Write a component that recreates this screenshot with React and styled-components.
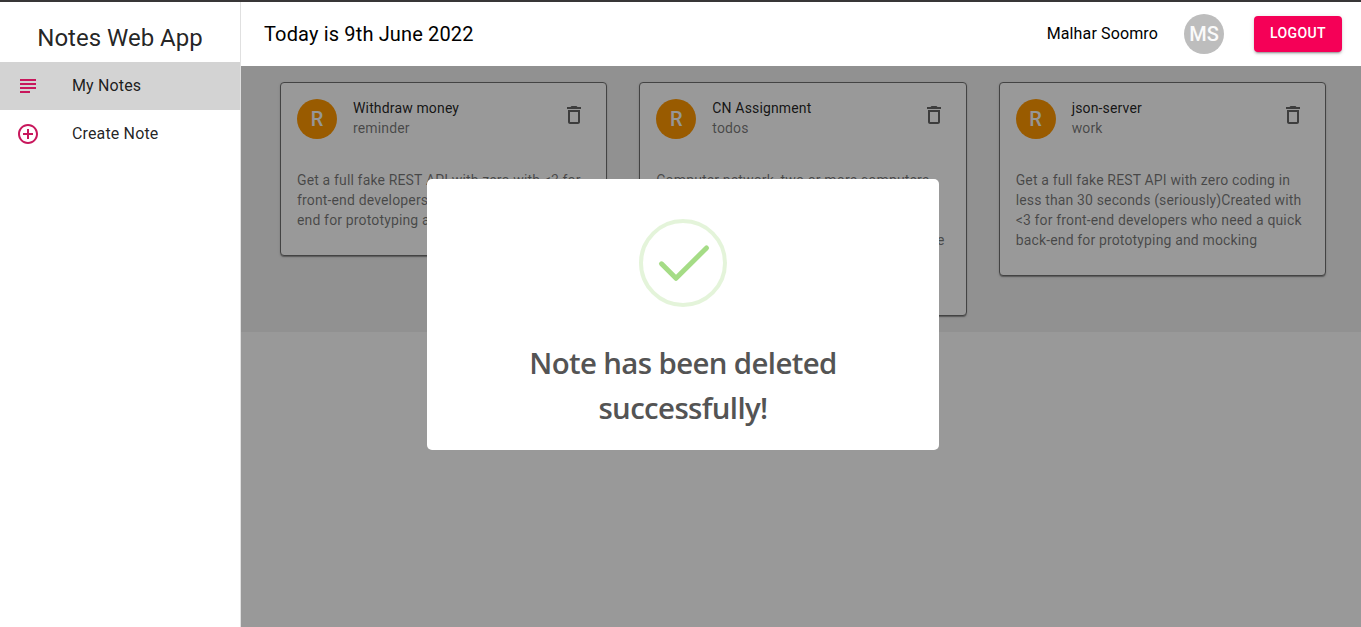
import React from "react";
import styled, { createGlobalStyle } from "styled-components";

const GlobalStyle = createGlobalStyle`
  *, *::before, *::after { box-sizing: border-box; }
  body {
    margin: 0;
    background: #fff;
    color: rgba(0, 0, 0, 0.87);
    font-family: Roboto, "Liberation Sans", sans-serif;
    font-size: 16px;
    overflow: hidden;
  }
`;

const Shell = styled.div`
  display: flex;
  height: 100vh;
  border-top: 2px solid #383637;
`;

const Sidebar = styled.aside`
  flex: none;
  width: 241px;
  border-right: 1px solid #e0e0e0;
`;

const Brand = styled.h1`
  margin: 0;
  padding-top: 20px;
  height: 60px;
  font-size: 24px;
  font-weight: 400;
  line-height: 32px;
  text-align: center;
`;

const NavItem = styled.a`
  display: flex;
  align-items: center;
  height: 48px;
  padding: 0 16px;
  gap: 32px;
  letter-spacing: 0.15px;
  line-height: 24px;
  background: ${(p) => (p.$active ? "#d3d3d3" : "transparent")};
`;

const Icon = styled.svg`
  flex: none;
  width: 24px;
  height: 24px;
  fill: ${(p) => p.$color};
`;

const Column = styled.div`
  flex: 1;
  display: flex;
  flex-direction: column;
`;

const TopBar = styled.header`
  flex: none;
  display: flex;
  align-items: center;
  height: 64px;
  padding: 0 19px 0 23px;
  color: #000;
`;

const Today = styled.div`
  flex: 1;
  font-size: 20px;
  letter-spacing: 0.15px;
`;

const UserName = styled.div`
  letter-spacing: 0.13px;
  line-height: 24px;
  padding-bottom: 1px;
`;

const Avatar = styled.div`
  flex: none;
  display: flex;
  align-items: center;
  justify-content: center;
  width: 40px;
  height: 40px;
  border-radius: 50%;
  background: ${(p) => p.$bg};
  color: #fafafa;
  font-size: 20px;
  font-weight: 500;
  margin: ${(p) => p.$margin || 0};
`;

const LogoutButton = styled.button`
  width: 88px;
  height: 36px;
  padding: 0 0 2px;
  border: 0;
  border-radius: 4px;
  background: #f50057;
  color: #fff;
  font: 500 14px Roboto, sans-serif;
  letter-spacing: 0.4px;
  box-shadow: 0 3px 1px -2px rgba(0, 0, 0, 0.2), 0 2px 2px rgba(0, 0, 0, 0.14),
    0 1px 5px rgba(0, 0, 0, 0.12);
`;

const Main = styled.main`
  flex: 1;
  position: relative;
`;

const Board = styled.section`
  display: grid;
  grid-template-columns: repeat(3, 1fr);
  align-items: start;
  gap: 32px;
  height: 266px;
  padding: 16px 35px 0 39px;
  background: #f2f2f2;
`;

const Card = styled.article`
  border: 1px solid #707070;
  border-radius: 4px;
  background: #fff;
  box-shadow: 0 2px 1px -1px rgba(0, 0, 0, 0.2), 0 1px 1px rgba(0, 0, 0, 0.14),
    0 1px 3px rgba(0, 0, 0, 0.12);
`;

const CardHeader = styled.div`
  display: flex;
  padding: 16px;
  font-size: 14px;
  line-height: 20px;
  letter-spacing: 0.15px;
`;

const CardTitles = styled.div`
  flex: 1;
  padding-left: 16px;
  margin-top: -1px;
`;

const Muted = styled.div`
  color: rgba(0, 0, 0, 0.54);
`;

const DeleteButton = styled.button`
  width: 48px;
  height: 48px;
  margin: -8px -8px 0 0;
  padding: 12px;
  border: 0;
  background: none;
`;

const CardText = styled.p`
  margin: 0;
  padding: 15px 0 25px 16px;
  color: rgba(0, 0, 0, 0.54);
  font-size: 14px;
  line-height: 20px;
  letter-spacing: 0.15px;
  white-space: pre-line;
`;

const Backdrop = styled.div`
  position: absolute;
  inset: 0;
  background: rgba(0, 0, 0, 0.4);
`;

const DialogLayer = styled.div`
  position: fixed;
  inset: 179px 0 auto 5px;
  display: flex;
  justify-content: center;
`;

const Dialog = styled.div`
  display: flex;
  flex-direction: column;
  align-items: center;
  width: 512px;
  height: 271px;
  padding-top: 40px;
  border-radius: 5px;
  background: #fff;
`;

const SuccessMark = styled.svg`
  width: 88px;
  height: 88px;
  fill: none;
`;

const DialogTitle = styled.h2`
  margin: 34px 0 0;
  color: #545454;
  font-family: "Open Sans", "Noto Sans", sans-serif;
  font-size: 29.4px;
  font-weight: 600;
  line-height: 45px;
  letter-spacing: -0.62px;
  text-align: center;
`;

const paths = {
  subject: "M14 17H4v2h10v-2zm6-8H4v2h16V9zM4 15h16v-2H4v2zM4 5v2h16V5H4z",
  add: "M13 7h-2v4H7v2h4v4h2v-4h4v-2h-4V7zm-1-5C6.48 2 2 6.48 2 12s4.480 10 10 10 10-4.480 10-10S17.520 2 12 2zm0 18c-4.410 0-8-3.590-8-8s3.590-8 8-8 8 3.590 8 8-3.590 8-8 8z",
  trash:
    "M6 19c0 1.100.900 2 2 2h8c1.100 0 2-.900 2-2V7H6v12zM8 9h8v10H8V9zm7.500-5l-1-1h-5l-1 1H5v2h14V4h-3.500z",
};

function Glyph({ name, color }) {
  return (
    <Icon viewBox="0 0 24 24" $color={color}>
      <path d={paths[name]} />
    </Icon>
  );
}

const notes = [
  {
    title: "Withdraw money",
    category: "reminder",
    text: "Get a full fake REST API with zero with <3 for\nfront-end developers who need a quick back-\nend for prototyping and mocking",
  },
  {
    title: "CN Assignment",
    category: "todos",
    text: "Computer network, two or more computers\nthat are connected with one another for\nthe purpose of communicating data\nelectronically. Besides connecting remote the\ncomputers, a network system serves to\nestablish a cohesive architecture",
  },
  {
    title: "json-server",
    category: "work",
    text: "Get a full fake REST API with zero coding in\nless than 30 seconds (seriously)Created with\n<3 for front-end developers who need a quick\nback-end for prototyping and mocking",
  },
];

function NoteCard({ note }) {
  return (
    <Card>
      <CardHeader>
        <Avatar $bg="#ff9800">R</Avatar>
        <CardTitles>
          <div>{note.title}</div>
          <Muted>{note.category}</Muted>
        </CardTitles>
        <DeleteButton aria-label="Delete note">
          <Glyph name="trash" color="rgba(0,0,0,0.6)" />
        </DeleteButton>
      </CardHeader>
      <CardText>{note.text}</CardText>
    </Card>
  );
}

export default function App() {
  return (
    <>
      <GlobalStyle />
      <Shell>
        <Sidebar>
          <Brand>Notes Web App</Brand>
          <NavItem $active>
            <Glyph name="subject" color="#c8175c" />
            My Notes
          </NavItem>
          <NavItem>
            <Glyph name="add" color="#c8175c" />
            Create Note
          </NavItem>
        </Sidebar>
        <Column>
          <TopBar>
            <Today>Today is 9th June 2022</Today>
            <UserName>Malhar Soomro</UserName>
            <Avatar $bg="#bdbdbd" $margin="0 30px 0 26px">MS</Avatar>
            <LogoutButton>LOGOUT</LogoutButton>
          </TopBar>
          <Main>
            <Board>
              {notes.map((note) => (
                <NoteCard key={note.title} note={note} />
              ))}
            </Board>
            <Backdrop />
          </Main>
        </Column>
      </Shell>
      <DialogLayer>
        <Dialog role="dialog">
          <SuccessMark viewBox="0 0 88 88">
            <circle cx="44" cy="44" r="42" stroke="#a5dc86" strokeOpacity="0.3" strokeWidth="4" />
            <path
              d="M22.500 44.800L37 59.300L67.500 29"
              stroke="#a5dc86"
              strokeWidth="5"
              strokeLinecap="round"
              strokeLinejoin="round"
            />
          </SuccessMark>
          <DialogTitle>
            Note has been deleted
            <br />
            successfully!
          </DialogTitle>
        </Dialog>
      </DialogLayer>
    </>
  );
}
